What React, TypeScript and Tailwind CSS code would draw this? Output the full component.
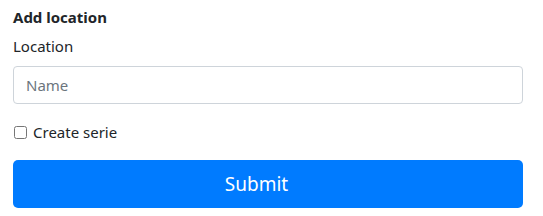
export default function App() {
  return (
    <div className="w-[543px] h-[216px] bg-white pl-[13px] pr-[20px] text-[#212529] font-['Segoe_UI','Noto_Sans',sans-serif]">
      <h6 className="pt-[7px] text-[15px] font-bold leading-[20px]">Add location</h6>
      <label className="block mt-[8px] text-[15px] leading-[22px]">Location</label>
      <input
        type="text"
        placeholder="Name"
        className="mt-[9px] block w-full h-[38px] px-[12px] text-[15px] border border-[#ced4da] rounded-[4px] placeholder:text-[#6c757d] outline-none"
      />
      <label className="mt-[17px] flex items-center gap-[6px] text-[15px] leading-[22px]">
        <input type="checkbox" className="w-[13px] h-[13px] ml-[1px]" />
        Create serie
      </label>
      <button className="mt-[17px] w-full h-[48px] pr-[23px] rounded-[5px] bg-[#007bff] text-white text-[19px]">
        Submit
      </button>
    </div>
  );
}
